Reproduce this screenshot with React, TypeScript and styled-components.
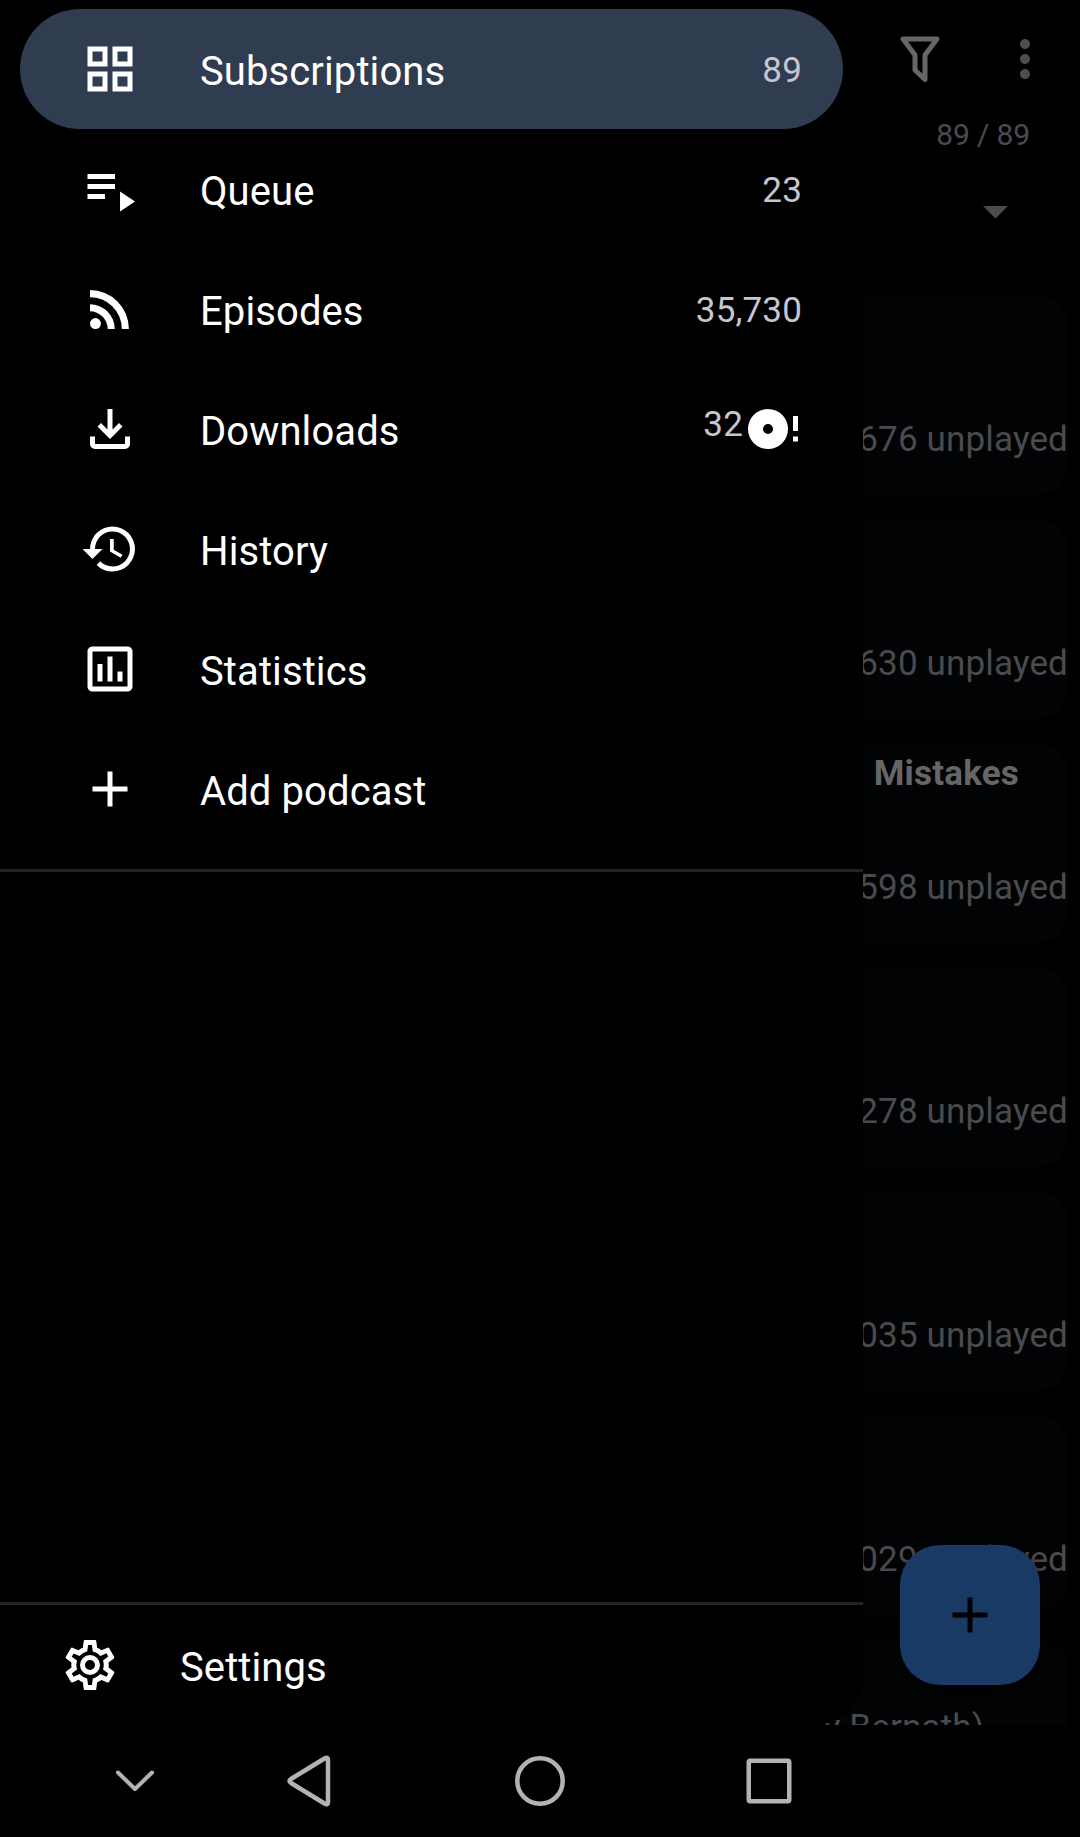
import React from "react";
import styled, { createGlobalStyle, css } from "styled-components";

const GlobalStyle = createGlobalStyle`
  *, *::before, *::after { box-sizing: border-box; }
  html, body { margin: 0; background: #000; }
  body { font-family: Roboto, "Liberation Sans", sans-serif; }
`;

const Screen = styled.div`
  position: relative;
  width: 1080px;
  height: 1837px;
  overflow: hidden;
  display: flex;
  flex-direction: column;
  background: #000;
`;

const Stage = styled.div`
  position: relative;
  height: 1725px;
  overflow: hidden;
`;

const Page = styled.main`
  height: 100%;
  display: flex;
  flex-direction: column;
`;

const Toolbar = styled.header`
  height: 118px;
  display: flex;
  justify-content: flex-end;
  align-items: center;
  gap: 45px;
  padding-right: 25px;
  flex: none;
  svg { display: block; }
`;

const Tally = styled.div`
  height: 34px;
  padding-right: 50px;
  text-align: right;
  font-size: 30px;
  line-height: 34px;
  letter-spacing: -0.15px;
  color: #4c4a4e;
`;

const SortRow = styled.div`
  height: 143px;
  display: flex;
  justify-content: flex-end;
  padding: 54px 72px 0 0;
  flex: none;
`;

const CardList = styled.div`
  display: flex;
  flex-direction: column;
  gap: 24px;
  padding: 0 12px;
`;

const Card = styled.article`
  height: 200px;
  flex: none;
  display: flex;
  flex-direction: column;
  justify-content: space-between;
  border-radius: 30px;
  background: #020305;
`;

const CardTitle = styled.h2`
  margin: 0;
  padding: 11px 49px 0 0;
  min-height: 51px;
  text-align: right;
  font-size: 35px;
  line-height: 40px;
  letter-spacing: 0.2px;
  font-weight: 700;
  color: #666;
`;

const CardCount = styled.p`
  margin: 0 0 34px;
  text-align: right;
  font-size: 35px;
  line-height: 42px;
  letter-spacing: 0.15px;
  color: #4c4a4e;
`;

const CardAuthor = styled.p`
  margin: 0;
  padding: 68px 84px 0 0;
  text-align: right;
  font-size: 35px;
  line-height: 42px;
  letter-spacing: 0.15px;
  color: #4c4a4e;
`;

const AddButton = styled.button`
  position: absolute;
  right: 40px;
  bottom: 40px;
  width: 140px;
  height: 140px;
  display: grid;
  place-items: center;
  padding: 0;
  border: 0;
  border-radius: 40px;
  background: #1a3a66;
  color: #000;
  box-shadow: 0 8px 18px rgba(0, 0, 0, 0.6);
`;

const Drawer = styled.nav`
  position: absolute;
  inset: 0 auto 0 0;
  width: 863px;
  display: flex;
  flex-direction: column;
  padding-top: 9px;
  border-radius: 0 0 48px 0;
  background: #000;
  color: #fff;
`;

const Items = styled.ul`
  list-style: none;
  margin: 0;
  padding: 0 20px;
  height: 860px;
`;

const Item = styled.li<{ $active?: boolean }>`
  height: 120px;
  display: flex;
  align-items: center;
  padding: 0 41px 0 60px;
  border-radius: 60px;
  ${(p) => p.$active && css`background: #303c4f;`}
`;

const Label = styled.span`
  margin-left: 60px;
  flex: 1;
  padding-top: 5px;
  font-size: 40px;
  line-height: 48px;
  letter-spacing: 0.1px;
`;

const Count = styled.span<{ $raised?: boolean }>`
  font-size: 35px;
  line-height: 42px;
  letter-spacing: 0.15px;
  color: #c7c5d0;
  ${(p) =>
    p.$raised
      ? css`
          padding-bottom: 8px;
          margin-right: 5px;
        `
      : css`
          padding-top: 4px;
        `}
`;

const CountGroup = styled.span`
  display: flex;
  align-items: center;
`;

const Divider = styled.hr`
  width: 100%;
  height: 3px;
  flex: none;
  margin: 0;
  border: 0;
  background: #242424;
`;

const Spacer = styled.div`
  flex: 1;
`;

const SettingsRow = styled.div`
  height: 120px;
  flex: none;
  display: flex;
  align-items: center;
  padding-left: 60px;
`;

const NavBar = styled.footer`
  flex: 1;
  background: #000;
  display: grid;
  grid-template-columns: 230px 117px 345px 114px;
  padding-left: 20px;
  align-items: center;
  justify-items: center;
  svg { display: block; }
`;

function Icon({ d, size = 60 }: { d: string; size?: number }) {
  return (
    <svg width={size} height={size} viewBox="0 0 24 24" fill="currentColor">
      <path d={d} fillRule="evenodd" />
    </svg>
  );
}

const paths = {
  grid: "M3 3v8h8V3H3zm6 6H5V5h4v4zm-6 4v8h8v-8H3zm6 6H5v-4h4v4zm4-16v8h8V3h-8zm6 6h-4V5h4v4zm-6 4v8h8v-8h-8zm6 6h-4v-4h4v4z",
  queue: "M3 6h11v2H3zM3 10h11v2H3zM3 14h7v2H3zM16 13v8l6-4z",
  rss: "M6.18 15.64a2.18 2.18 0 1 1 0 4.36 2.18 2.18 0 0 1 0-4.36M4 4.44A15.56 15.56 0 0 1 19.56 20h-2.83A12.73 12.73 0 0 0 4 7.27V4.44m0 5.66a9.9 9.9 0 0 1 9.9 9.9h-2.83A7.07 7.07 0 0 0 4 12.93V10.1z",
  download:
    "M12 16l-5-5 1.4-1.45 2.6 2.6V4h2v8.15l2.6-2.6L17 11zM6 20q-.825 0-1.412-.587Q4 18.825 4 18v-3h2v3h12v-3h2v3q0 .825-.587 1.413Q18.825 20 18 20z",
  history:
    "M13 3a9 9 0 0 0-9 9H1l3.89 3.89.07.14L9 12H6c0-3.87 3.13-7 7-7s7 3.13 7 7-3.13 7-7 7c-1.93 0-3.68-.79-4.94-2.06l-1.42 1.42A8.954 8.954 0 0 0 13 21a9 9 0 0 0 0-18zm-1 5v5l4.28 2.54.72-1.21-3.5-2.08V8H12z",
  stats:
    "M9 17H7v-7h2v7zm4 0h-2V7h2v10zm4 0h-2v-4h2v4zm2 2H5V5h14v14zm0-16H5c-1.1 0-2 .9-2 2v14c0 1.1.9 2 2 2h14c1.1 0 2-.9 2-2V5c0-1.1-.9-2-2-2z",
  plus: "M19 13h-6v6h-2v-6H5v-2h6V5h2v6h6v2z",
  gear: "M12 8a4 4 0 0 1 4 4 4 4 0 0 1-4 4 4 4 0 0 1-4-4 4 4 0 0 1 4-4m0 2a2 2 0 0 0-2 2 2 2 0 0 0 2 2 2 2 0 0 0 2-2 2 2 0 0 0-2-2m-2 12c-.25 0-.46-.18-.5-.42l-.37-2.65c-.63-.25-1.17-.59-1.69-.99l-2.49 1.01c-.22.08-.49 0-.61-.22l-2-3.46c-.13-.22-.07-.49.12-.64l2.11-1.66L4.5 12l.07-1-2.11-1.63c-.19-.15-.25-.42-.12-.64l2-3.46c.12-.22.39-.31.61-.22l2.49 1c.52-.39 1.06-.73 1.69-.98l.37-2.65c.04-.24.25-.42.5-.42h4c.25 0 .46.18.5.42l.37 2.65c.63.25 1.17.59 1.69.98l2.49-1c.22-.09.49 0 .61.22l2 3.46c.13.22.07.49-.12.64L19.43 11l.07 1-.07 1 2.11 1.63c.19.15.25.42.12.64l-2 3.46c-.12.22-.39.31-.61.22l-2.49-1c-.52.39-1.06.73-1.69.98l-.37 2.65c-.04.24-.25.42-.5.42h-4m1.25-18-.37 2.61c-1.2.25-2.26.89-3.03 1.78L5.44 7.35l-.75 1.3L6.8 10.2a5.55 5.55 0 0 0 0 3.6l-2.12 1.56.75 1.3 2.43-1.04c.77.88 1.82 1.52 3.01 1.76l.37 2.62h1.52l.37-2.61c1.19-.25 2.24-.89 3.01-1.77l2.43 1.04.75-1.3-2.12-1.55c.4-1.17.4-2.44 0-3.61l2.11-1.55-.75-1.3-2.41 1.04a5.42 5.42 0 0 0-3.03-1.77L12.75 4h-1.5z",
  dots: "M12 8c1.1 0 2-.9 2-2s-.9-2-2-2-2 .9-2 2 .9 2 2 2zm0 2c-1.1 0-2 .9-2 2s.9 2 2 2 2-.9 2-2-.9-2-2-2zm0 6c-1.1 0-2 .9-2 2s.9 2 2 2 2-.9 2-2-.9-2-2-2z",
};

const menu = [
  { label: "Subscriptions", icon: paths.grid, count: "89", active: true },
  { label: "Queue", icon: paths.queue, count: "23" },
  { label: "Episodes", icon: paths.rss, count: "35,730" },
  { label: "Downloads", icon: paths.download, count: "32", alert: true },
  { label: "History", icon: paths.history },
  { label: "Statistics", icon: paths.stats },
  { label: "Add podcast", icon: paths.plus },
];

const cards = [
  { count: "676 unplayed" },
  { count: "630 unplayed" },
  { count: "598 unplayed", title: "Mistakes" },
  { count: "278 unplayed" },
  { count: "035 unplayed" },
  { count: "029 unplayed" },
];

function DiscAlert() {
  return (
    <svg width="54" height="60" viewBox="0 0 54 60" fill="#fff">
      <path
        fillRule="evenodd"
        d="M20 10a20 20 0 1 1 0 40 20 20 0 0 1 0-40m0 15a5 5 0 1 0 0 10 5 5 0 0 0 0-10M45 17h5v15h-5zM45 37.500h5v5h-5z"
      />
    </svg>
  );
}

export default function App() {
  return (
    <Screen>
      <GlobalStyle />
      <Stage>
        <Page>
          <Toolbar>
            <svg width="60" height="60" viewBox="0 0 60 60" fill="none" stroke="#666" strokeWidth="5" strokeLinejoin="round">
              <path d="M13 10h34L35 26v24.500L25 41V26z" />
            </svg>
            <svg width="60" height="60" viewBox="0 0 24 24" fill="#4f4d51">
              <path d={paths.dots} />
            </svg>
          </Toolbar>
          <Tally>89 / 89</Tally>
          <SortRow>
            <svg width="25" height="13" viewBox="0 0 25 13" fill="#4c4a4e">
              <path d="M0 0h25L12.500 12.500z" />
            </svg>
          </SortRow>
          <CardList>
            {cards.map((c) => (
              <Card key={c.count}>
                <CardTitle>{c.title}</CardTitle>
                <CardCount>{c.count}</CardCount>
              </Card>
            ))}
            <Card>
              <CardAuthor>y Bernath)</CardAuthor>
            </Card>
          </CardList>
        </Page>
        <AddButton aria-label="Add">
          <Icon d={paths.plus} />
        </AddButton>
        <Drawer>
          <Items>
            {menu.map((m) => (
              <Item key={m.label} $active={m.active}>
                <Icon d={m.icon} />
                <Label>{m.label}</Label>
                <CountGroup>
                  {m.count && <Count $raised={m.alert}>{m.count}</Count>}
                  {m.alert && <DiscAlert />}
                </CountGroup>
              </Item>
            ))}
          </Items>
          <Divider />
          <Spacer />
          <Divider />
          <SettingsRow>
            <Icon d={paths.gear} />
            <Label>Settings</Label>
          </SettingsRow>
        </Drawer>
      </Stage>
      <NavBar>
        <svg width="40" height="22" viewBox="0 0 40 22" fill="none" stroke="#b3b3b3" strokeWidth="4" strokeLinecap="round" strokeLinejoin="round">
          <path d="M3 2.500l17 16.500L37 2.500" />
        </svg>
        <svg width="44" height="52" viewBox="0 0 44 52" fill="none" stroke="#b3b3b3" strokeWidth="4.500" strokeLinejoin="round">
          <path d="M37.500 3.500Q41 1.500 41 5V47Q41 50.500 37.500 48.500L4 28Q1 26 4 24z" />
        </svg>
        <svg width="50" height="50" viewBox="0 0 50 50" fill="none" stroke="#b3b3b3" strokeWidth="4.500">
          <circle cx="25" cy="25" r="22.700" />
        </svg>
        <svg width="46" height="46" viewBox="0 0 46 46" fill="none" stroke="#b3b3b3" strokeWidth="4.500">
          <rect x="2.750" y="2.750" width="40.500" height="40.500" rx="1.500" />
        </svg>
      </NavBar>
    </Screen>
  );
}
